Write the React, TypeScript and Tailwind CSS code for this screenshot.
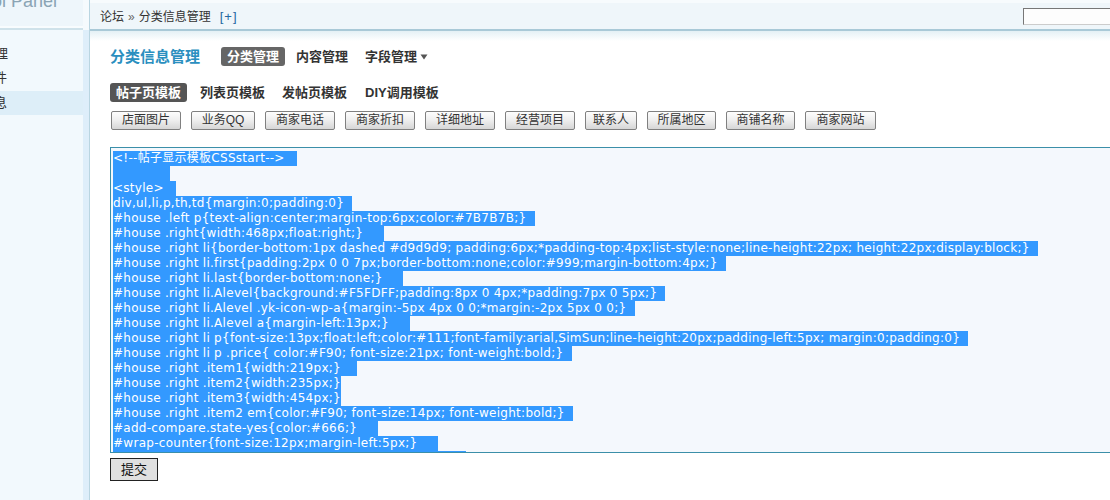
import React from "react";

const sidebarItems = [
  { text: "分类管理", ml: "-ml-[44px]", active: false },
  { text: "插件", ml: "-ml-[19px]", active: false },
  { text: "分类信息", ml: "-ml-[45px]", active: true },
];

const fieldButtons = [
  { label: "店面图片", w: "w-[70px]" },
  { label: "业务QQ", w: "w-[64px]" },
  { label: "商家电话", w: "w-[70px]" },
  { label: "商家折扣", w: "w-[70px]" },
  { label: "详细地址", w: "w-[70px]" },
  { label: "经营项目", w: "w-[70px]" },
  { label: "联系人", w: "w-[52px]" },
  { label: "所属地区", w: "w-[69px]" },
  { label: "商铺名称", w: "w-[69px]" },
  { label: "商家网站", w: "w-[71px]" },
];

const codeLines = [
  "<!--帖子显示模板CSSstart-->   ",
  "              ",
  "<style>   ",
  "div,ul,li,p,th,td{margin:0;padding:0}  ",
  "#house .left p{text-align:center;margin-top:6px;color:#7B7B7B;}  ",
  "#house .right{width:468px;float:right;}     ",
  "#house .right li{border-bottom:1px dashed #d9d9d9; padding:6px;*padding-top:4px;list-style:none;line-height:22px; height:22px;display:block;}  ",
  "#house .right li.first{padding:2px 0 0 7px;border-bottom:none;color:#999;margin-bottom:4px;}  ",
  "#house .right li.last{border-bottom:none;}     ",
  "#house .right li.Alevel{background:#F5FDFF;padding:8px 0 4px;*padding:7px 0 5px;}  ",
  "#house .right li.Alevel .yk-icon-wp-a{margin:-5px 4px 0 0;*margin:-2px 5px 0 0;}  ",
  "#house .right li.Alevel a{margin-left:13px;}     ",
  "#house .right li p{font-size:13px;float:left;color:#111;font-family:arial,SimSun;line-height:20px;padding-left:5px; margin:0;padding:0}  ",
  "#house .right li p .price{ color:#F90; font-size:21px; font-weight:bold;}  ",
  "#house .right .item1{width:219px;}    ",
  "#house .right .item2{width:235px;}",
  "#house .right .item3{width:454px;}",
  "#house .right .item2 em{color:#F90; font-size:14px; font-weight:bold;}  ",
  "#add-compare.state-yes{color:#666;}     ",
  "#wrap-counter{font-size:12px;margin-left:5px;}     ",
  "#house .left{width:230px;float:left;text-align:center;}   ",
];

export default function App() {
  return (
    <div className="w-[1110px] h-[500px] overflow-hidden flex bg-white text-[#333] font-[family-name:'Liberation_Sans','Noto_Sans_CJK_SC',sans-serif]">
      {/* Sidebar */}
      <aside className="w-[90px] shrink-0 flex h-full">
        <div className="w-[83px] h-full flex flex-col bg-[#f2f9fd] overflow-hidden">
          <div className="h-[26px] bg-[#eef6fb] overflow-hidden">
            <div className="-ml-[52px] -mt-[9px] text-[18px] leading-[20px] text-[#8aa4b4] whitespace-nowrap">
              Control Panel
            </div>
          </div>
          <div className="h-[2px] bg-[#f8fcfe]" />
          <div className="h-[2px] bg-[#cfe2ea]" />
          <div className="pt-[12px] flex flex-col">
            {sidebarItems.map((it) => (
              <div
                key={it.text}
                className={`h-[24px] leading-[24px] text-[13px] text-[#333] whitespace-nowrap ${it.active ? "bg-[#ddeef8] h-[22px] leading-[22px] mt-[1px]" : ""}`}
              >
                <span className={`inline-block ${it.ml}`}>{it.text}</span>
              </div>
            ))}
          </div>
        </div>
        <div className="w-[6px] h-full flex flex-col">
          <div className="h-[30px] bg-[#f5fafd]" />
          <div className="flex-1 bg-[#deeefa]" />
        </div>
        <div className="w-[1px] h-full bg-[#b9d5e1]" />
      </aside>

      {/* Main */}
      <main className="flex-1 min-w-0 h-full flex flex-col overflow-hidden">
        <div className="h-[3px] bg-[#f7fbfd]" />
        <div className="h-[26px] bg-[#eff6fa] flex items-center justify-between pl-[10px]">
          <div className="text-[12px] leading-[16px] flex items-center gap-[4px] mt-[1px]">
            <span>论坛</span>
            <span className="text-[#666]">»</span>
            <span>分类信息管理</span>
            <span className="text-[#2468a2] ml-[5px] text-[13px] tracking-[1px]">[+]</span>
          </div>
          <div className="w-[100px] h-[17px] -mr-[13px] border border-t-[#777] border-l-[#777] border-b-[#ccc] border-r-[#ccc] bg-[#fdfdfd]" />
        </div>
        <div className="h-[2px] bg-[#a9c9d7]" />
        <div className="h-[10px] bg-gradient-to-b from-[#e4f0f5] to-white" />

        <div className="pl-[20px] flex flex-col">
          {/* Title row */}
          <div className="flex items-center mt-[6px] h-[19px]">
            <h1 className="text-[15px] font-bold text-[#2b8fbf] leading-[19px] mr-[21px]">分类信息管理</h1>
            <div className="flex items-center gap-[5px] text-[13px] font-bold leading-[19px]">
              <span className="px-[6px] bg-[#666] text-white rounded-[3px] h-[19px]">分类管理</span>
              <span className="px-[6px] text-[#333]">内容管理</span>
              <span className="px-[6px] text-[#333] flex items-center gap-[3px]">
                字段管理
                <svg width="8" height="8" viewBox="0 0 8 8" className="mt-[1px]">
                  <path d="M0.5 1.5 L7.5 1.5 L4 6.5 Z" fill="#555" />
                </svg>
              </span>
            </div>
          </div>

          {/* Template tabs */}
          <div className="flex items-center gap-[5px] mt-[17px] h-[19px] text-[13px] font-bold leading-[19px]">
            <span className="px-[6px] bg-[#555] text-white rounded-[3px] h-[19px]">帖子页模板</span>
            <span className="px-[6px] ml-[2px]">列表页模板</span>
            <span className="px-[6px]">发帖页模板</span>
            <span className="px-[6px] ml-[1px]">DIY调用模板</span>
          </div>

          {/* Field buttons */}
          <div className="flex items-center gap-[10px] mt-[9px] pl-[1px]">
            {fieldButtons.map((b) => (
              <button
                key={b.label}
                className={`${b.w} h-[19px] shrink-0 border border-[#808080] rounded-[2px] bg-gradient-to-b from-[#fdfdfd] via-[#eeeeee] to-[#d6d6d6] text-[12px] leading-[17px] text-[#333] text-center`}
              >
                {b.label}
              </button>
            ))}
          </div>

          {/* Code box */}
          <div className="mt-[17px] w-[1012px] h-[306px] shrink-0 border border-[#3b8fa9] bg-[#f4f8fd] pt-[3px] pl-[2px] overflow-hidden font-[family-name:'DejaVu_Sans','Noto_Sans_CJK_SC',sans-serif] text-[12px] tracking-[0.28px]">
            {codeLines.map((line, i) => (
              <div key={i} className="h-[15px] leading-[15px] whitespace-pre">
                <span className="inline-block h-[15px] bg-[#3399ff] text-white">{line}</span>
              </div>
            ))}
          </div>

          {/* Submit */}
          <div className="mt-[4px]">
            <button className="w-[48px] h-[23px] border border-[#222] bg-[#e0e0e0] text-[13px] leading-[21px] text-[#111]">
              提交
            </button>
          </div>
        </div>
      </main>
    </div>
  );
}
